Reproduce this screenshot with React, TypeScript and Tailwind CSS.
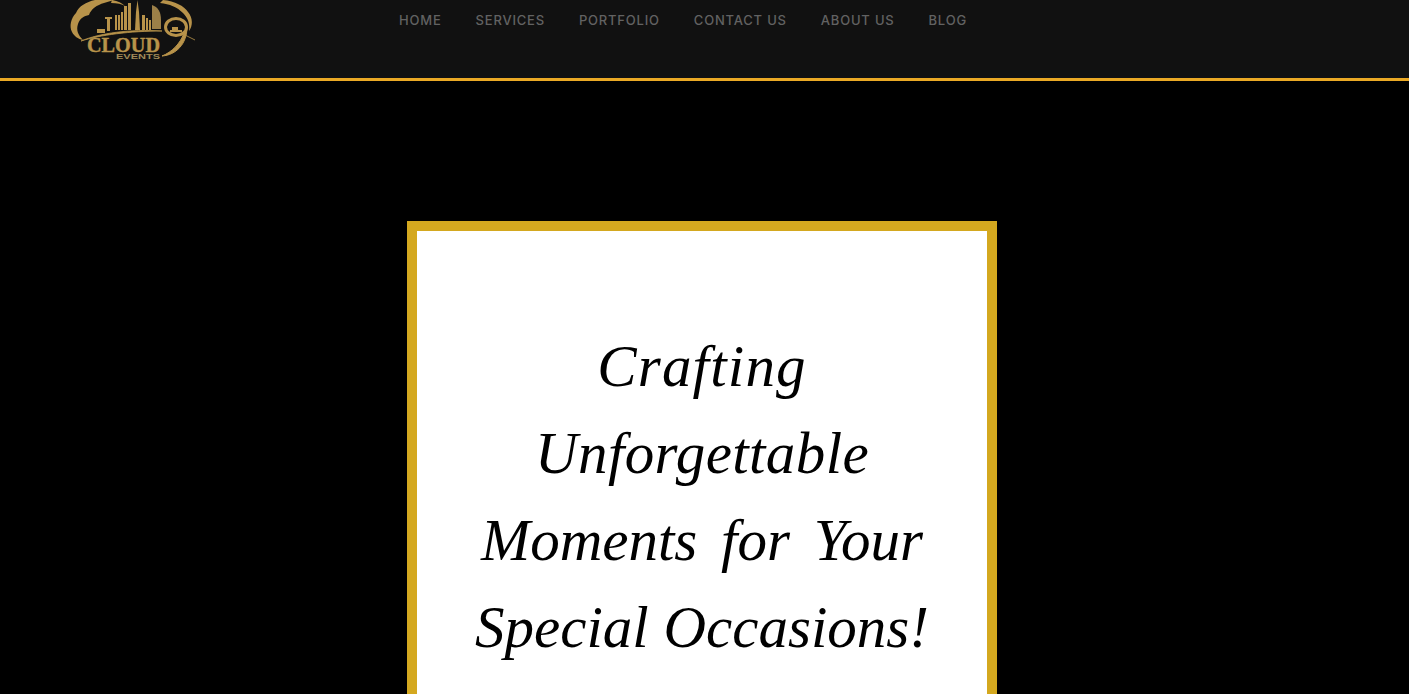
import React from 'react';

const navLinks = ['HOME', 'SERVICES', 'PORTFOLIO', 'CONTACT US', 'ABOUT US', 'BLOG'];

const Logo: React.FC = () => {
  return (
    <svg className="w-[170px] h-[78px] shrink-0" viewBox="50 0 170 78" fill="none">
      {/* cloud lobes */}
      <path d="M95 0C86 2 79 6 76 13C71 18 69 26 72 32C74 36 78 39 83 40C78 35 76 30 78 24C80 18 84 16 89 15C91 9 97 5 104 3L114 0Z" fill="#b8934a" />
      <path d="M112 0C118 1 122 3 125 6C122 4 117 3 111 3Z" fill="#b8934a" />
      <path d="M163 0C175 1 184 6 188 12C193 18 193 26 189 31C190 24 188 18 183 13C177 7 170 4 160 3Z" fill="#b8934a" />
      {/* skyline */}
      <g fill="#b8934a">
        <rect x="97" y="29" width="8" height="4" />
        <rect x="107" y="18" width="3" height="13" />
        <rect x="105" y="17" width="7" height="2" />
        <rect x="115" y="15" width="2" height="15" />
        <rect x="118" y="15" width="2" height="15" />
        <rect x="121" y="12" width="2" height="18" />
        <rect x="124" y="6" width="3" height="24" />
        <rect x="128" y="3" width="3" height="27" />
        <path d="M135 30L136 12L137.5 0L139 12L140 30Z" />
        <rect x="142" y="15" width="3" height="15" />
        <rect x="146" y="18" width="2" height="12" />
        <rect x="149" y="20" width="2" height="10" />
      </g>
      <path d="M152 5C158 7 161 12 161 20V29H152Z" fill="#9c8048" />
      <path d="M81 41C100 33 130 29 162 31C130 31 100 35 81 41Z" fill="#b8934a" stroke="#b8934a" strokeWidth="0.8" />
      {/* the 9 */}
      <ellipse cx="176" cy="27" rx="10.5" ry="8.5" stroke="#b8934a" strokeWidth="3" />
      <path d="M187 27C187 44 176 55 162 56C172 52 180 44 184 33Z" fill="#b8934a" stroke="#b8934a" strokeWidth="1" />
      <path d="M170 30h2v-3h6v3h4v2h-12z" fill="#b8934a" />
      <path d="M185 35L195 40" stroke="#b8934a" strokeWidth="0.8" />
      <text x="87" y="52" textLength="73" lengthAdjust="spacingAndGlyphs" fill="#b8934a" stroke="#b8934a" strokeWidth="0.4" fontFamily="'Liberation Serif', serif" fontWeight="700" fontSize="20">CLOUD</text>
      <text x="116" y="59" textLength="44" lengthAdjust="spacingAndGlyphs" fill="#a08a58" fontFamily="'Liberation Sans', sans-serif" fontWeight="700" fontSize="8">EVENTS</text>
    </svg>
  );
};

const App: React.FC = () => {
  return (
    <div className="h-screen overflow-hidden bg-black">
      <header className="flex pl-[50px] h-[81px] bg-[#111111] border-b-[3px] border-[#eaa925] overflow-hidden">
        <Logo />
        <nav className="flex gap-[34px] ml-[179px] pt-[12px] font-['Inter',sans-serif] text-[13px] leading-[16px] font-medium tracking-[0.8px] text-[#626262]">
          {navLinks.map((link) => (
            <a key={link} href="#">{link}</a>
          ))}
        </nav>
      </header>

      <main className="flex justify-center pt-[140px] pr-[5px]">
        <section className="w-[590px] h-[600px] shrink-0 border-[10px] border-[#d4a81f] bg-white pt-[92px] text-center font-['Liberation_Serif',serif] italic text-[59px] leading-[87px] text-black">
          <h1>
            <span className="tracking-[1.2px]">Crafting</span><br />
            <span className="tracking-[0.4px]">Unforgettable</span><br />
            <span className="[word-spacing:9px]">Moments for Your</span><br />
            Special Occasions!
          </h1>
        </section>
      </main>
    </div>
  );
};

export default App;
